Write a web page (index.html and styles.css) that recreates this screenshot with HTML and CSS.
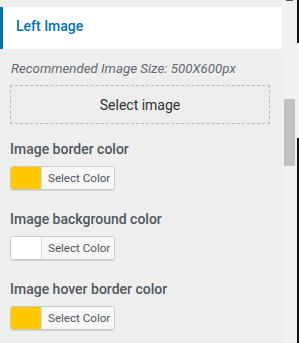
FILE: index.html
```html
<!DOCTYPE html>
<html lang="en">
<head>
    <meta charset="UTF-8">
    <meta name="viewport" content="width=device-width, initial-scale=1.0">
    <title>Left Image</title>
    <link rel="stylesheet" href="styles.css">
</head>
<body>

    <!-- Customizer panel -->
    <div class="panel">
        <div class="section-title">Left Image</div>

        <div class="controls">
            <p class="description">Recommended Image Size: 500X600px</p>
            <button class="select-image">Select image</button>

            <div class="control">
                <span class="control-label">Image border color</span>
                <div class="color-picker">
                    <span class="swatch swatch-yellow"></span>
                    <span class="picker-button">Select Color</span>
                </div>
            </div>

            <div class="control">
                <span class="control-label">Image background color</span>
                <div class="color-picker">
                    <span class="swatch swatch-white"></span>
                    <span class="picker-button">Select Color</span>
                </div>
            </div>

            <div class="control">
                <span class="control-label">Image hover border color</span>
                <div class="color-picker">
                    <span class="swatch swatch-yellow"></span>
                    <span class="picker-button">Select Color</span>
                </div>
            </div>
        </div>
    </div>

    <!-- Scrollbar -->
    <div class="scrollbar">
        <div class="scroll-arrow"></div>
        <div class="scroll-thumb"></div>
    </div>
    <div class="edge"></div>

</body>
</html>
```

FILE: styles.css
```css
body {
    font-family: Roboto, "Liberation Sans", sans-serif;
    margin: 0;
    padding: 0;
    width: 299px;
    height: 343px;
    overflow: hidden;
    display: flex;
    background-color: #eeeeee;
}

/* Panel */
.panel {
    width: 282px;
    padding-top: 7px;
    background-color: #eeeeee;
}

.section-title {
    background-color: #fff;
    border-left: 3px solid #0073aa;
    padding: 9px 0 13px 13px;
    font-size: 14px;
    line-height: 20px;
    font-weight: 500;
    color: #0073aa;
}

.controls {
    padding: 0 12px 0 10px;
}

.description {
    margin: 11px 0 0 1px;
    font-size: 13.3px;
    line-height: 18px;
    font-style: italic;
    color: #646970;
}

.select-image {
    display: block;
    width: 260px;
    height: 39px;
    margin-top: 7px;
    border: 1px dashed #b4b9be;
    background-color: #ededed;
    font-family: inherit;
    font-size: 14px;
    color: #2c3338;
    padding: 0;
}

/* Color controls */
.control {
    display: flex;
    flex-direction: column;
    align-items: flex-start;
    margin-top: 15px;
}

.control + .control {
    margin-top: 19px;
}

.control-label {
    font-size: 14px;
    line-height: 20px;
    font-weight: 500;
    color: #50575e;
}

.color-picker {
    display: flex;
    height: 22px;
    margin-top: 7px;
    border: 1px solid #c9c9c9;
    border-radius: 3px;
    box-shadow: 0 1px 0 #d4d4d4;
    overflow: hidden;
}

.swatch {
    width: 30px;
}

.swatch-yellow {
    background-color: #ffc800;
}

.swatch-white {
    background-color: #fff;
}

.picker-button {
    display: flex;
    align-items: center;
    padding: 0 4px 0 6px;
    white-space: nowrap;
    border-left: 1px solid #dcdcdc;
    background-color: #f7f7f7;
    font-size: 11.6px;
    color: #50575e;
}

/* Scrollbar */
.scrollbar {
    width: 15px;
    display: flex;
    flex-direction: column;
    background-color: #f1f1f1;
}

.scroll-arrow {
    width: 7px;
    height: 1px;
    margin-left: 4px;
    background-color: #505050;
}

.scroll-thumb {
    width: 11px;
    height: 67px;
    margin: 98px 0 0 2px;
    background-color: #c1c1c1;
}

.edge {
    width: 2px;
    background: linear-gradient(#111 0, #111 43px, #f4f4f4 43px, #f4f4f4 138px, #111 138px);
}
```
